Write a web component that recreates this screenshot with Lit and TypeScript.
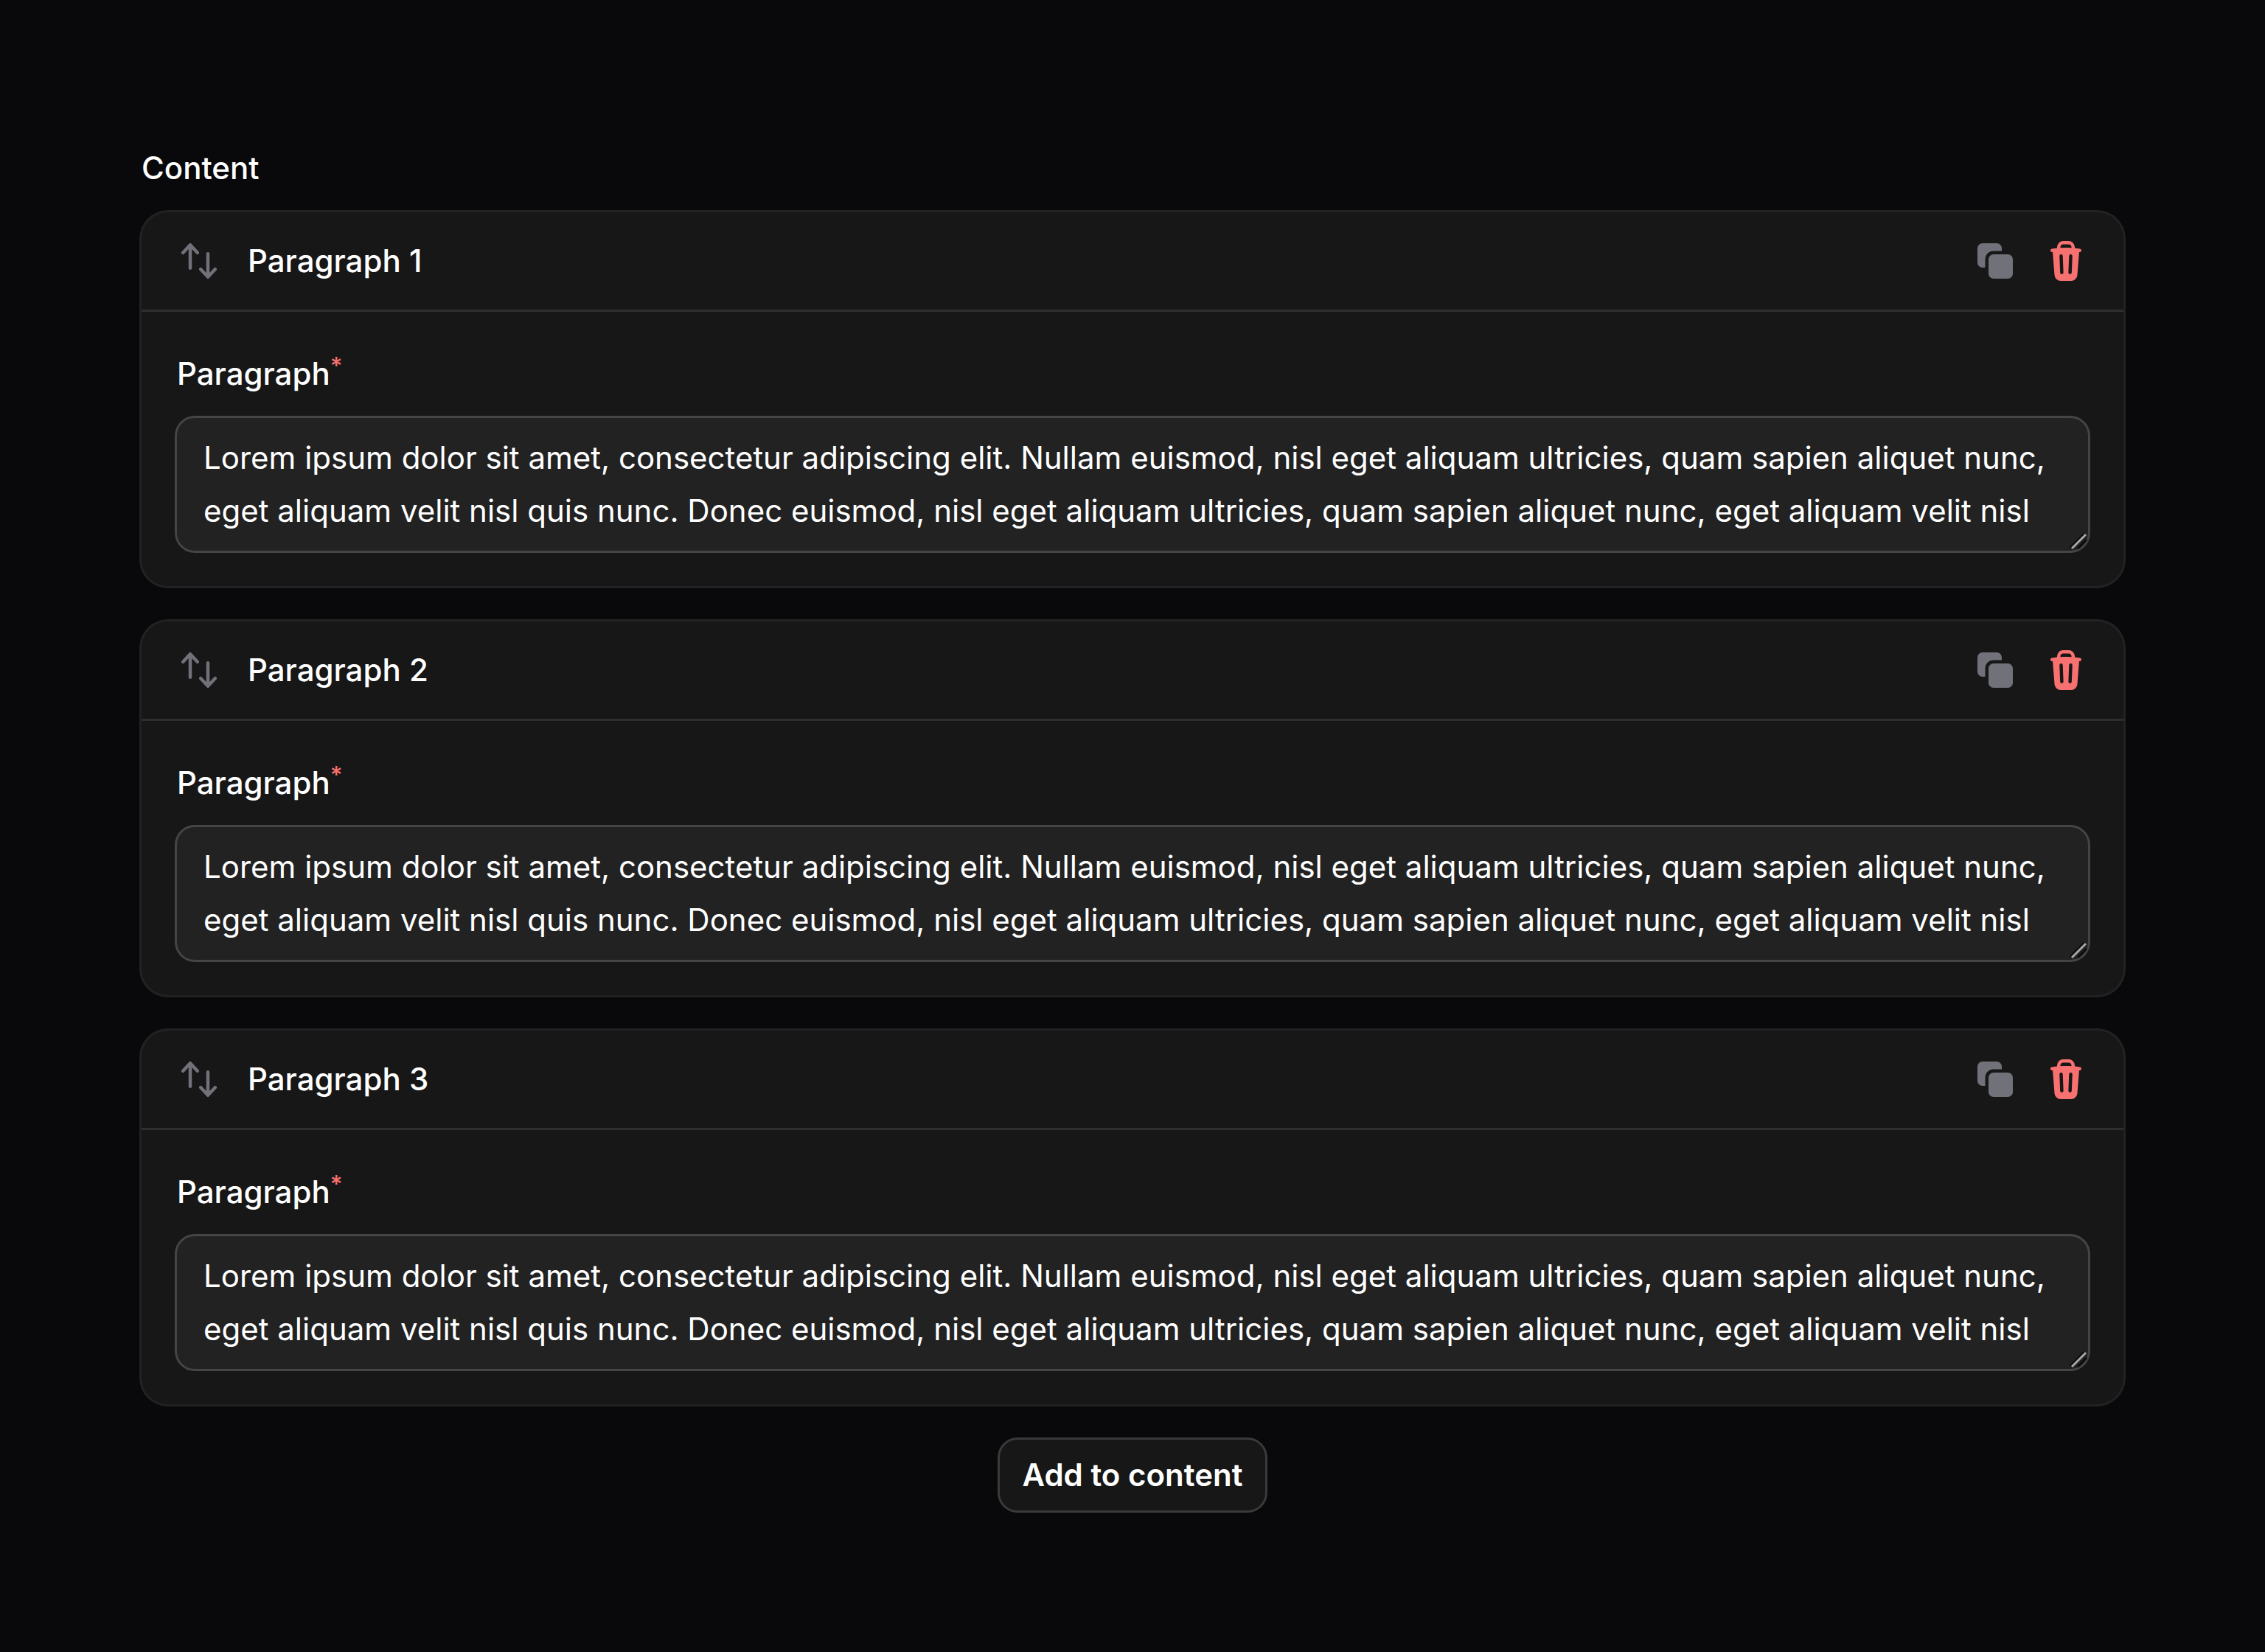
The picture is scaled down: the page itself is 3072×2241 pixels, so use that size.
import { LitElement, html, svg, css } from "lit";
import { customElement, property, state } from "lit/decorators.js";

const LOREM =
  "Lorem ipsum dolor sit amet, consectetur adipiscing elit. Nullam euismod, nisl eget aliquam ultricies, quam sapien aliquet nunc, eget aliquam velit nisl quis nunc. Donec euismod, nisl eget aliquam ultricies, quam sapien aliquet nunc, eget aliquam velit nisl";

const icons = {
  reorder: svg`<path fill-rule="evenodd" clip-rule="evenodd" d="M2.24 6.8a.75.75 0 001.06-.04l1.95-2.1v8.59a.75.75 0 001.5 0V4.66l1.95 2.1a.75.75 0 101.1-1.02l-3.25-3.5a.75.75 0 00-1.1 0L2.2 5.74a.75.75 0 00.04 1.06zm8 6.4a.75.75 0 00-.04 1.06l3.25 3.5a.75.75 0 001.1 0l3.25-3.5a.75.75 0 10-1.1-1.02l-1.95 2.1V6.75a.75.75 0 00-1.5 0v8.59l-1.95-2.1a.75.75 0 00-1.06-.04z"/>`,
  clone: svg`<path d="M2 4.25A2.25 2.25 0 014.25 2h6.5A2.25 2.25 0 0113 4.25V5.5H9.25A3.75 3.75 0 005.5 9.25V13H4.25A2.25 2.25 0 012 10.75v-6.5z"/><path d="M9.25 7A2.25 2.25 0 007 9.25v6.5A2.25 2.25 0 009.25 18h6.5A2.25 2.25 0 0018 15.75v-6.5A2.25 2.25 0 0015.75 7h-6.5z"/>`,
  trash: svg`<path fill-rule="evenodd" clip-rule="evenodd" d="M8.75 1A2.75 2.75 0 006 3.75v.443c-.795.077-1.584.176-2.365.298a.75.75 0 10.23 1.482l.149-.022.841 10.518A2.75 2.75 0 007.596 19h4.807a2.75 2.75 0 002.742-2.53l.841-10.52.149.023a.75.75 0 00.23-1.482A41.03 41.03 0 0014 4.193V3.75A2.75 2.75 0 0011.25 1h-2.5zM10 4c.84 0 1.673.025 2.5.075V3.75c0-.69-.56-1.25-1.25-1.25h-2.5c-.69 0-1.25.56-1.25 1.25v.325C8.327 4.025 9.16 4 10 4zM8.58 7.72a.75.75 0 00-1.5.06l.3 7.5a.75.75 0 101.5-.06l-.3-7.5zm4.34.06a.75.75 0 10-1.5-.06l-.3 7.5a.75.75 0 101.5.06l.3-7.5z"/>`,
};

const icon = (name: keyof typeof icons) =>
  html`<svg class="icon" viewBox="0 0 20 20" fill="currentColor" aria-hidden="true">${icons[name]}</svg>`;

/** One entry of the repeater: a header with its actions above a text field. */
@customElement("repeater-item")
export class RepeaterItem extends LitElement {
  @property({ type: Number }) index = 1;
  @property() value = "";

  static styles = css`
    :host {
      display: block;
      border-radius: 36px;
      background: #171717;
      box-shadow: 0 0 0 3px #222223;
    }
    .header {
      display: flex;
      align-items: center;
      gap: 36px;
      padding: 36px 48px;
    }
    .title {
      flex: 1;
      margin: 0;
      font-size: 42px;
      font-weight: 500;
      line-height: 60px;
    }
    .action {
      display: block;
      flex: none;
      padding: 0;
      border: 0;
      background: none;
      color: #71717a;
      cursor: pointer;
    }
    .danger {
      color: #f87171;
    }
    .icon {
      display: block;
      width: 60px;
      height: 60px;
    }
    .body {
      display: grid;
      gap: 24px;
      padding: 48px;
      border-top: 3px solid #2e2e2e;
    }
    .label {
      justify-self: start;
      font-size: 42px;
      font-weight: 500;
      line-height: 72px;
    }
    .required {
      position: relative;
      top: -14px;
      vertical-align: baseline;
      font-size: 32px;
      line-height: 0;
      color: #f87171;
    }
    .field {
      position: relative;
      display: flex;
      border-radius: 24px;
      background: #222222;
      box-shadow: 0 0 0 3px #454545;
    }
    .input {
      box-sizing: border-box;
      width: 100%;
      margin: 0;
      padding: 18px 36px;
      border: 0;
      outline: 0;
      resize: none;
      overflow: auto;
      scrollbar-width: none;
      background: none;
      color: inherit;
      font: inherit;
      font-variation-settings: inherit;
      font-size: 42px;
      font-weight: 380;
      line-height: 72px;
    }
    .grip {
      position: absolute;
      right: 0;
      bottom: 0;
      width: 27px;
      height: 27px;
      pointer-events: none;
    }
  `;

  render() {
    return html`
      <header class="header">
        <button class="action" type="button" aria-label="Move">${icon("reorder")}</button>
        <h3 class="title">Paragraph ${this.index}</h3>
        <button class="action" type="button" aria-label="Clone">${icon("clone")}</button>
        <button class="action danger" type="button" aria-label="Delete"
          @click=${() => this.dispatchEvent(new CustomEvent("remove"))}>${icon("trash")}</button>
      </header>
      <div class="body">
        <label class="label" for="text">Paragraph<sup class="required">*</sup></label>
        <div class="field">
          <textarea class="input" id="text" rows="2" required spellcheck="false" .value=${this.value}></textarea>
          <svg class="grip" viewBox="0 0 27 27" fill="none" aria-hidden="true">
            <path d="M3 23 22 4M13 24 25 12" stroke="#0c0c0c" stroke-width="3"/>
            <path d="M5 24 24 5" stroke="#a8a8a8" stroke-width="3"/>
          </svg>
        </div>
      </div>
    `;
  }
}

@customElement("app-root")
export class AppRoot extends LitElement {
  @state() private items = [LOREM, LOREM, LOREM];

  static styles = css`
    :host {
      display: block;
      box-sizing: border-box;
      min-height: 100vh;
      padding: 192px;
      background: #09090b;
      color: #ffffff;
      font-family: Inter, "Liberation Sans", sans-serif;
      font-variation-settings: "opsz" 14;
      -webkit-font-smoothing: antialiased;
    }
    .repeater {
      display: grid;
      gap: 24px;
    }
    .heading {
      margin: 0;
      font-size: 42px;
      font-weight: 500;
      line-height: 72px;
    }
    .list {
      display: grid;
      gap: 48px;
    }
    .add {
      justify-self: center;
      padding: 18px 30px;
      border: 0;
      border-radius: 24px;
      background: #171717;
      box-shadow: 0 0 0 3px #3a3a3b;
      color: inherit;
      font: inherit;
      font-variation-settings: inherit;
      font-size: 42px;
      font-weight: 600;
      line-height: 60px;
      cursor: pointer;
    }
  `;

  render() {
    return html`
      <section class="repeater">
        <h2 class="heading">Content</h2>
        <div class="list">
          ${this.items.map(
            (text, i) => html`<repeater-item .index=${i + 1} .value=${text}
              @remove=${() => (this.items = this.items.filter((_, n) => n !== i))}></repeater-item>`
          )}
          <button class="add" type="button" @click=${() => (this.items = [...this.items, ""])}>Add to content</button>
        </div>
      </section>
    `;
  }
}
